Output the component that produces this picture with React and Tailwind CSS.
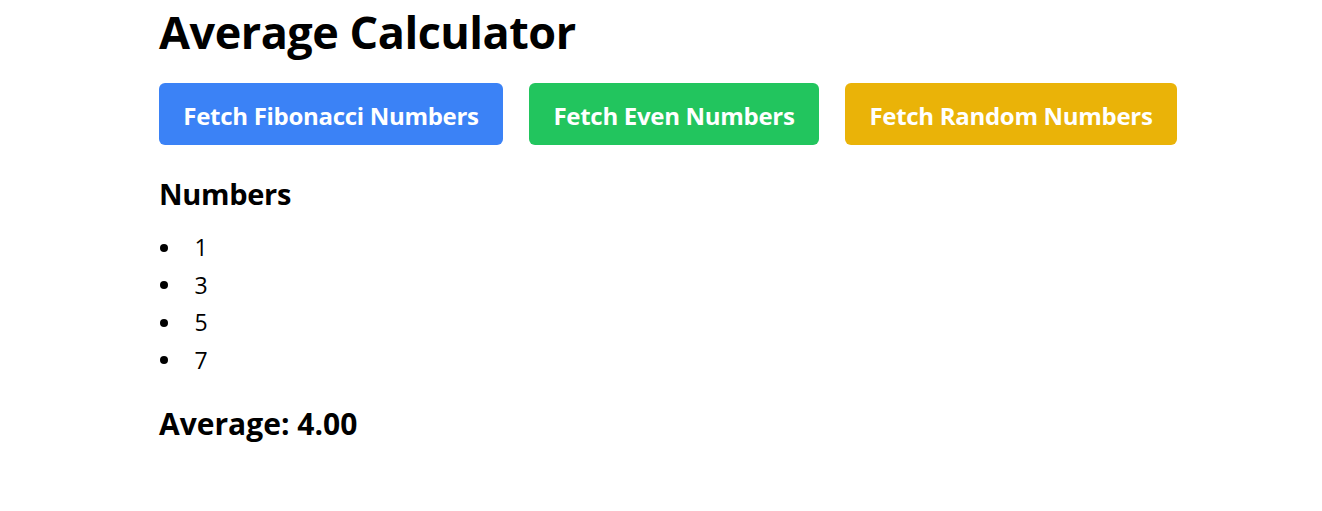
const NUMBERS = [1, 3, 5, 7]

const BUTTONS = [
  { label: 'Fetch Fibonacci Numbers', className: 'w-[344px] bg-[#3b82f6]' },
  { label: 'Fetch Even Numbers', className: 'w-[290px] bg-[#22c55e]' },
  { label: 'Fetch Random Numbers', className: 'w-[332px] bg-[#eab308]' },
]

export default function App() {
  const avg = NUMBERS.reduce((a, b) => a + b, 0) / NUMBERS.length

  return (
    <div className="min-h-[511px] bg-white font-['Open_Sans',sans-serif] text-black">
      <div className="mx-auto max-w-[1004px]">
        <h1 className="pt-[2px] text-[45px] leading-[60px] font-bold tracking-[-0.5px]">
          Average Calculator
        </h1>

        <div className="mt-[21px] flex gap-[26px]">
          {BUTTONS.map((b) => (
            <button
              key={b.label}
              className={`h-[62px] shrink-0 rounded-[6px] pt-[4px] text-[24px] font-bold tracking-[-0.3px] text-white ${b.className}`}
            >
              {b.label}
            </button>
          ))}
        </div>

        <h2 className="mt-[29px] text-[29px] leading-[40px] font-bold tracking-[-0.3px]">Numbers</h2>

        <ul className="mt-[15px] text-[23px] leading-[37.5px]">
          {NUMBERS.map((n) => (
            <li key={n} className="flex items-center">
              <span className="ml-[0.5px] h-[8px] w-[8px] rounded-full bg-black" />
              <span className="ml-[27px]">{n}</span>
            </li>
          ))}
        </ul>

        <h3 className="mt-[26px] text-[30px] leading-[38px] font-bold tracking-[0px]">
          Average: {avg.toFixed(2)}
        </h3>
      </div>
    </div>
  )
}
